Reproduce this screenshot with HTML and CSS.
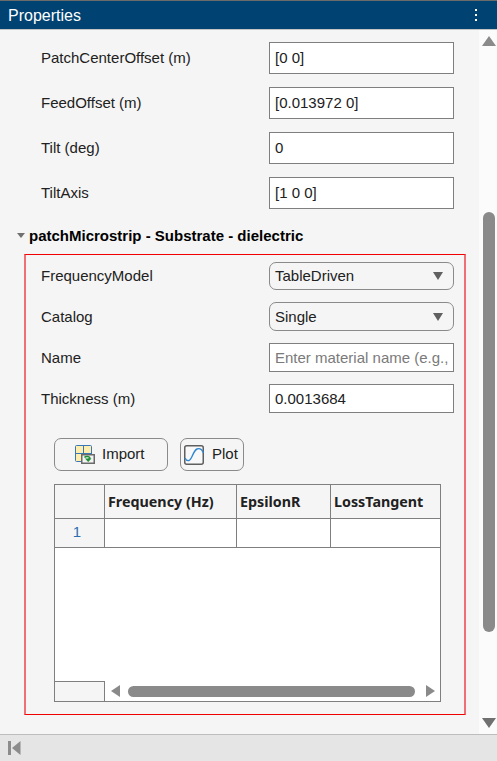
FILE: index.html
```html
<!DOCTYPE html>
<html lang="en">
<head>
    <meta charset="UTF-8">
    <title>Properties</title>
    <link rel="stylesheet" href="styles.css">
</head>
<body>
    <div class="panel">
        <div class="title-bar">
            <span class="title">Properties</span>
            <span class="kebab"><i></i><i></i><i></i></span>
        </div>

        <div class="middle">
            <div class="content">
                <div class="rows top-rows">
                    <div class="row"><label>PatchCenterOffset (m)</label><input type="text" value="[0 0]"></div>
                    <div class="row"><label>FeedOffset (m)</label><input type="text" value="[0.013972 0]"></div>
                    <div class="row"><label>Tilt (deg)</label><input type="text" value="0"></div>
                    <div class="row"><label>TiltAxis</label><input type="text" value="[1 0 0]"></div>
                </div>

                <div class="section-head">
                    <span class="caret"></span>
                    <span>patchMicrostrip - Substrate - dielectric</span>
                </div>

                <div class="red-box">
                    <div class="rows box-rows">
                        <div class="row first-row"><label>FrequencyModel</label><div class="dropdown first"><span>TableDriven</span><span class="drop-arrow"></span></div></div>
                        <div class="row"><label>Catalog</label><div class="dropdown"><span>Single</span><span class="drop-arrow"></span></div></div>
                        <div class="row"><label>Name</label><input type="text" class="short" placeholder="Enter material name (e.g., FR4)"></div>
                        <div class="row"><label>Thickness (m)</label><input type="text" class="short" value="0.0013684"></div>
                    </div>

                    <div class="buttons">
                        <button class="btn import-btn">
                            <svg width="20" height="19" viewBox="0 0 20 19">
                                <rect x="0.5" y="0.5" width="16" height="16" rx="1" fill="#fdeeb0" stroke="#3a78b5"/>
                                <path d="M8.500 0.500V16.500M0.500 8.500H16.500" stroke="#3a78b5" fill="none"/>
                                <rect x="6.750" y="9.750" width="12.500" height="8.500" fill="#f2f2f2" stroke="#6a6a6a" stroke-width="1.500"/>
                                <path d="M9.500 12.500c1-1.500 4.500-1.500 5.500 0.500l-1.500 1" stroke="#1e8f35" stroke-width="1.500" fill="none"/>
                                <path d="M10 13.500l3.200 3.500 3.300-3.500z" fill="#1e8f35"/>
                            </svg>
                            <span class="btn-label">Import</span>
                        </button>
                        <button class="btn plot-btn">
                            <svg width="20" height="20" viewBox="0 0 20 20">
                                <rect x="0.750" y="0.750" width="18.500" height="18.500" rx="2" fill="#f8f8f8" stroke="#5f5f5f" stroke-width="1.500"/>
                                <path d="M1 13C2 15 3.500 16 5 15.500C8 14.500 9 6 13 4C15.500 3 18 4.500 19.500 8" stroke="#2f86d0" stroke-width="1.400" fill="none"/>
                            </svg>
                            <span class="btn-label">Plot</span>
                        </button>
                    </div>

                    <div class="table-box">
                        <table>
                            <tr class="head-row">
                                <th class="col-index"></th>
                                <th class="col-freq">Frequency (Hz)</th>
                                <th class="col-eps">EpsilonR</th>
                                <th class="col-loss">LossTangent</th>
                            </tr>
                            <tr class="data-row">
                                <td class="index-cell">1</td>
                                <td></td>
                                <td></td>
                                <td></td>
                            </tr>
                        </table>
                        <div class="table-fill"></div>
                        <div class="table-bottom">
                            <div class="corner"></div>
                            <span class="arrow-left"></span>
                            <div class="h-thumb"></div>
                            <span class="arrow-right"></span>
                        </div>
                    </div>
                </div>
            </div>

            <div class="scrollbar">
                <span class="arrow-up"></span>
                <div class="v-thumb"></div>
                <span class="arrow-down"></span>
            </div>
        </div>

        <div class="footer">
            <svg width="13" height="14" viewBox="0 0 13 14">
                <rect x="0" y="0" width="3" height="14" fill="#8c8c8c"/>
                <path d="M12.500 0V14L4 7z" fill="#8c8c8c"/>
            </svg>
        </div>
    </div>
</body>
</html>
```

FILE: styles.css
```css
html, body {
    margin: 0;
    padding: 0;
}
body {
    font-family: "Liberation Sans", Arial, sans-serif;
    font-size: 15px;
    color: #212121;
    background-color: #f5f5f5;
}
.panel {
    display: flex;
    flex-direction: column;
    width: 497px;
    height: 761px;
    overflow: hidden;
}
.title-bar {
    display: flex;
    align-items: center;
    justify-content: space-between;
    box-sizing: border-box;
    height: 30px;
    padding: 0 20px 0 8px;
    background-color: #004272;
    border-top: 1px solid #6b6b6b;
    border-bottom: 1px solid #c4c4c4;
    color: #ffffff;
    font-size: 16px;
}
.title {
    padding-top: 2px;
}
.kebab {
    display: flex;
    flex-direction: column;
    gap: 3px;
}
.kebab i {
    width: 2px;
    height: 2px;
    background-color: #ffffff;
}
.middle {
    display: flex;
    flex: 1;
    min-height: 0;
}
.content {
    flex: 1;
    min-width: 0;
}
.rows {
    display: flex;
    flex-direction: column;
}
.row {
    display: flex;
    align-items: center;
    padding-left: 41px;
}
.row label {
    width: 228px;
}
.row input {
    box-sizing: border-box;
    width: 185px;
    height: 32px;
    margin: 0;
    padding: 0 5px;
    border: 1px solid #7f7f7f;
    border-radius: 0;
    outline: none;
    background-color: #ffffff;
    color: #212121;
    font-family: inherit;
    font-size: 15px;
}
.row input::placeholder {
    color: #7a7a7a;
}
.top-rows {
    gap: 13px;
    padding-top: 12px;
}
.top-rows label,
.first-row label {
    padding-bottom: 2px;
}
.top-rows input {
    padding-bottom: 2px;
}
.first-row .dropdown span:first-child {
    padding-bottom: 2px;
}
.section-head {
    display: flex;
    align-items: center;
    gap: 4px;
    height: 18px;
    margin: 17px 0 0 17px;
    color: #000000;
    font-weight: bold;
}
.caret {
    width: 0;
    height: 0;
    border-left: 4px solid transparent;
    border-right: 4px solid transparent;
    border-top: 5px solid #707070;
}
.red-box {
    box-sizing: border-box;
    width: 442px;
    height: 461px;
    margin: 10px 0 0 24px;
    border: 1px solid #f00000;
    border-left: 2px solid #f06f75;
    border-right: 2px solid #f06f75;
}
.box-rows {
    gap: 12px;
    padding-top: 7px;
    margin-left: -26px;
}
.box-rows .short,
.dropdown {
    height: 29px;
}
.dropdown {
    display: flex;
    align-items: center;
    justify-content: space-between;
    box-sizing: border-box;
    width: 185px;
    padding: 0 10px 0 5px;
    border: 1px solid #8a8a8a;
    border-radius: 7px;
}
.dropdown.first {
    height: 28px;
}
.drop-arrow {
    width: 0;
    height: 0;
    border-left: 5px solid transparent;
    border-right: 5px solid transparent;
    border-top: 8px solid #606060;
}
.buttons {
    display: flex;
    gap: 12px;
    margin: 25px 0 0 28px;
}
.btn {
    display: flex;
    align-items: center;
    box-sizing: border-box;
    height: 33px;
    padding: 0;
    border: 1px solid #8a8a8a;
    border-radius: 7px;
    background-color: #f5f5f5;
    color: #212121;
    font-family: inherit;
    font-size: 15px;
}
.btn-label {
    padding-bottom: 2px;
}
.import-btn {
    width: 114px;
    gap: 7px;
    padding-left: 20px;
}
.plot-btn {
    width: 64px;
    gap: 8px;
    padding-left: 3px;
}
.table-box {
    display: flex;
    flex-direction: column;
    box-sizing: border-box;
    width: 387px;
    height: 218px;
    margin: 13px 0 0 28px;
    border: 1px solid #7f7f7f;
    background-color: #ffffff;
}
table {
    border-collapse: separate;
    border-spacing: 0;
    table-layout: fixed;
    width: 385px;
}
th, td {
    box-sizing: border-box;
    padding: 0 0 0 3px;
    border-right: 1px solid #7f7f7f;
    border-bottom: 1px solid #7f7f7f;
}
th:last-child, td:last-child {
    border-right: none;
}
th {
    background-color: #f5f5f5;
    color: #212121;
    font-family: "Noto Sans", sans-serif;
    font-size: 14.3px;
    font-weight: bold;
    text-align: left;
    white-space: nowrap;
}
.head-row {
    height: 34px;
}
.data-row {
    height: 29px;
}
.col-index {
    width: 50px;
}
.col-freq {
    width: 132px;
}
.col-eps {
    width: 94px;
}
.col-loss {
    width: 109px;
}
.index-cell {
    padding: 0 5px 3px 0;
    background-color: #f5f5f5;
    color: #2c6fb0;
    text-align: center;
}
.table-fill {
    flex: 1;
}
.table-bottom {
    display: flex;
    align-items: center;
    height: 20px;
}
.corner {
    box-sizing: border-box;
    width: 50px;
    height: 20px;
    background-color: #f5f5f5;
    border-top: 1px solid #7f7f7f;
    border-right: 1px solid #7f7f7f;
}
.arrow-left {
    width: 0;
    height: 0;
    margin-left: 6px;
    border-top: 6px solid transparent;
    border-bottom: 6px solid transparent;
    border-right: 9px solid #8a8a8a;
}
.h-thumb {
    width: 287px;
    height: 11px;
    margin-left: 8px;
    border-radius: 6px;
    background-color: #8a8a8a;
}
.arrow-right {
    width: 0;
    height: 0;
    margin-left: 11px;
    border-top: 6px solid transparent;
    border-bottom: 6px solid transparent;
    border-left: 9px solid #8a8a8a;
}
.scrollbar {
    display: flex;
    flex-direction: column;
    align-items: center;
    width: 18px;
    background-color: #fbfbfb;
}
.arrow-up {
    width: 0;
    height: 0;
    margin: 6px 0 0 1px;
    border-left: 7px solid transparent;
    border-right: 7px solid transparent;
    border-bottom: 10px solid #8a8a8a;
}
.v-thumb {
    width: 12px;
    height: 420px;
    margin: 166px 0 0 2px;
    border-radius: 6px;
    background-color: #8a8a8a;
}
.arrow-down {
    width: 0;
    height: 0;
    margin: 86px 0 0 1px;
    border-left: 7px solid transparent;
    border-right: 7px solid transparent;
    border-top: 10px solid #707070;
}
.footer {
    display: flex;
    align-items: center;
    box-sizing: border-box;
    height: 27px;
    padding-left: 8px;
    background-color: #e5e5e5;
    border-top: 1px solid #bdbdbd;
}
```
